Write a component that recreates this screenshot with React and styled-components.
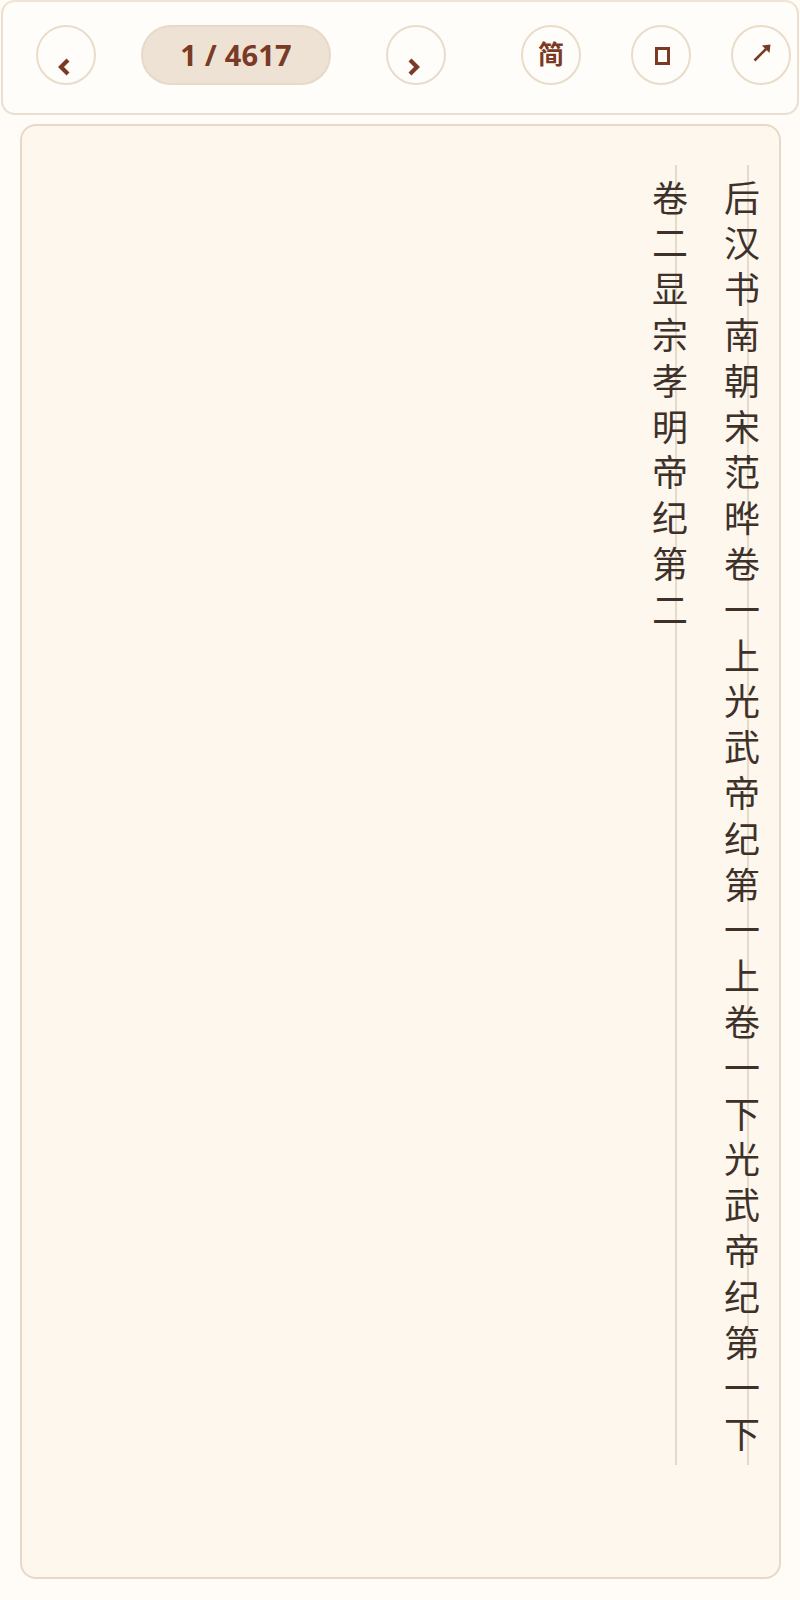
import React from "react";
import styled, { createGlobalStyle } from "styled-components";

const GlobalStyle = createGlobalStyle`
  html, body { margin: 0; padding: 0; background: #fffcf7; }
  body { font-family: "Noto Sans", "Noto Sans CJK SC", sans-serif; }
  * { box-sizing: border-box; }
`;

const Page = styled.div`
  width: 800px;
  display: flex;
  flex-direction: column;
`;

const Toolbar = styled.header`
  height: 115px;
  margin: 0 1px 0 1px;
  padding: 23px 0 0 33px;
  display: flex;
  align-items: flex-start;
  background: #fffdf9;
  border: 2px solid #ebdfd0;
  border-top-color: #efe4d6;
  border-radius: 14px;
`;

const RoundButton = styled.button`
  flex: none;
  width: 60px;
  height: 60px;
  margin-left: ${(p) => p.$before || 0}px;
  padding: 0;
  border-radius: 50%;
  border: 2.5px solid #eadccb;
  background: #fffdf9;
  color: #7a3a25;
  display: flex;
  align-items: center;
  justify-content: center;
  cursor: pointer;
`;

const PagePill = styled.div`
  flex: none;
  width: 190px;
  height: 60px;
  margin-left: ${(p) => p.$before || 0}px;
  border-radius: 30px;
  border: 2px solid #e8d9c7;
  background: #eee2d4;
  color: #7a3a25;
  display: flex;
  align-items: center;
  justify-content: center;
  font-family: "Open Sans", "Noto Sans", sans-serif;
  font-weight: 700;
  font-size: 29px;
  letter-spacing: 0.2px;
  padding-bottom: 2px;
`;

const GlyphLabel = styled.span`
  font-family: "Noto Sans CJK SC", "Noto Sans", sans-serif;
  font-weight: 700;
  font-size: 26px;
  line-height: 1;
  margin-top: -4px;
`;

const TofuBox = styled.span`
  display: block;
  flex: none;
  width: 15px;
  height: 18px;
  border: 3px solid #7a3a25;
  margin: 2px 0 0 2px;
`;

const Card = styled.main`
  margin: 9px 19px 20px 20px;
  padding: 39px 1px 112px 0;
  background: #fdf7ee;
  border: 2px solid #e7d9c8;
  border-radius: 16px;
  display: flex;
  flex-direction: row-reverse;
`;

const Column = styled.div`
  width: 72px;
  height: 1300px;
  padding-top: 15px;
  writing-mode: vertical-rl;
  white-space: nowrap;
  font-family: "Noto Sans CJK SC", "Noto Sans", sans-serif;
  font-size: 36px;
  line-height: 72px;
  letter-spacing: 9.8px;
  color: #3e3129;
  background: linear-gradient(#e5dbcd, #e5dbcd) no-repeat;
  background-size: 2px 100%;
  background-position: 41px 0;
`;

const ChevronIcon = ({ dir }) => (
  <svg width="14" height="18" viewBox="0 0 14 18" style={{ marginTop: 23, marginLeft: -5 }}>
    <polyline
      points={dir === "left" ? "11,2 4,9 11,16" : "3,2 10,9 3,16"}
      fill="none"
      stroke="#7a3a25"
      strokeWidth="4.2"
      strokeLinejoin="miter"
    />
  </svg>
);

const ArrowIcon = () => (
  <svg width="20" height="20" viewBox="0 0 20 20" style={{ marginTop: -5, marginLeft: 1 }}>
    <line x1="2.5" y1="17.5" x2="14" y2="6" stroke="#7a3a25" strokeWidth="2.6" />
    <polygon points="18.5,1.5 17.5,10 10,2.5" fill="#7a3a25" />
  </svg>
);

const columns = [
  "后汉书南朝宋范晔卷一上光武帝纪第一上卷一下光武帝纪第一下",
  "卷二显宗孝明帝纪第二",
];

export default function App() {
  return (
    <Page>
      <GlobalStyle />
      <Toolbar>
        <RoundButton aria-label="上一页">
          <ChevronIcon dir="left" />
        </RoundButton>
        <PagePill $before={45}>1 / 4617</PagePill>
        <RoundButton $before={55} aria-label="下一页">
          <ChevronIcon dir="right" />
        </RoundButton>
        <RoundButton $before={75}>
          <GlyphLabel>简</GlyphLabel>
        </RoundButton>
        <RoundButton $before={50}>
          <TofuBox />
        </RoundButton>
        <RoundButton $before={40}>
          <ArrowIcon />
        </RoundButton>
      </Toolbar>
      <Card>
        {columns.map((text, i) => (
          <Column key={i}>{text}</Column>
        ))}
      </Card>
    </Page>
  );
}
